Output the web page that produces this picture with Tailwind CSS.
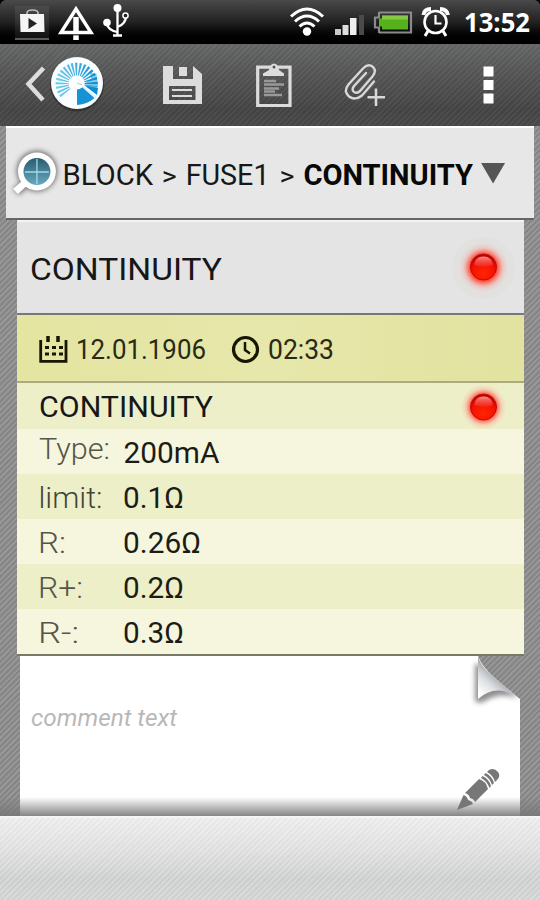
<!DOCTYPE html>
<html lang="en">
  <head>
    <meta charset="UTF-8" />
    <meta name="viewport" content="width=device-width, initial-scale=1.0" />
    <title>Continuity</title>
    <script src="https://cdn.jsdelivr.net/npm/@tailwindcss/browser@4"></script>
    <style>
      body {
        font-family: Roboto, sans-serif;
      }
      .hatch-dark {
        background:
          repeating-linear-gradient(135deg, #ffffff0a 0 1.5px, #0000000a 1.5px 4px),
          linear-gradient(#666868, #575757 35%, #464646 80%, #4a4a4a);
      }
      .hatch-gray {
        background: repeating-linear-gradient(135deg, #989898 0 1.5px, #868687 2px 4px);
      }
      .hatch-light {
        background:
          repeating-linear-gradient(135deg, #ffffff22 0 1.5px, #00000006 2px 4px),
          linear-gradient(#efefef, #e2e2e2 40%, #d1d2d2 75%, #d5d6d6);
      }
    </style>
  </head>
  <body class="w-[540px] h-[900px] overflow-hidden flex flex-col text-[#171717] whitespace-nowrap">
    <!-- Status bar -->
    <div class="h-[44px] shrink-0 bg-linear-to-b from-[#4a4a4a] via-[#222] to-black flex items-center">
      <svg class="w-[400px] h-[44px]" viewBox="0 0 400 44" fill="none">
        <path d="M0 0H5Q1 1 0 5Z" fill="#000" />
        <!-- market -->
        <rect x="15" y="6" width="34" height="32" fill="#fff" opacity=".07" />
        <path d="M27 14v-1q0-3 5.500-3t5.500 3v1" stroke="#bbb" stroke-width="1.700" />
        <path d="M20 14H44L44.500 32H20.500Z" fill="#f4f4f4" />
        <path d="M28.500 18V29L37 23.500Z" fill="#222" />
        <path d="M15 39H49" stroke="#777" stroke-width="1.500" />
        <!-- warning -->
        <path d="M76 9L61 32.500H91Z" stroke="#fff" stroke-width="3.400" />
        <path d="M76 17V40" stroke="#fff" stroke-width="5.500" />
        <path d="M73 34.800H79" stroke="#333" stroke-width="1.300" />
        <!-- usb -->
        <circle cx="117.500" cy="8" r="4" fill="#fff" />
        <path d="M117.500 8V35M113 35.500H122M106.500 23Q108 30 117 32M117.500 27Q126 24 126 16" stroke="#fff" stroke-width="2.300" />
        <circle cx="107" cy="22.500" r="3.800" fill="#fff" />
        <circle cx="125.500" cy="15.500" r="2.600" stroke="#fff" stroke-width="1.500" fill="#222" />
        <!-- wifi -->
        <g stroke="#fff" stroke-width="3">
          <path d="M291 16.500Q307 1.500 323 16.500" />
          <path d="M295 21.500Q307 10.500 319 21.500" />
          <path d="M299.500 26.500Q307 19.500 314.500 26.500" />
        </g>
        <circle cx="307" cy="31.500" r="4.200" fill="#fff" />
        <!-- signal -->
        <path d="M335 29h6v6h-6z" fill="#c8c8c8" />
        <path d="M342.500 25h6v10h-6z" fill="#ddd" />
        <path d="M350 18h6.500v17H350z" fill="#eee" />
        <path d="M359 15h5v20h-5z" fill="#4a4a4a" />
        <!-- battery -->
        <path d="M379 12.500H400M379 32.500H400M379 12V17.500H375V27.500H379V33" stroke="#8a8a8a" stroke-width="2.200" />
        <path d="M382 15.500h18v14H382v-3h-3v-8h3z" fill="#55b21c" />
        <path d="M382 15.500h18v4h-18z" fill="#83c943" />
      </svg>
      <svg class="w-[140px] h-[44px]" viewBox="400 0 140 44" fill="none">
        <path d="M540 0H535Q539 1 540 5Z" fill="#000" />
        <path d="M400 12.500H411V32.500H400" stroke="#8a8a8a" stroke-width="2.200" />
        <path d="M400 15.500h8v14h-8z" fill="#55b21c" />
        <path d="M400 15.500h8v4h-8z" fill="#83c943" />
        <circle cx="435.500" cy="22" r="11" stroke="#fff" stroke-width="2.600" />
        <path d="M435.500 15V23.500H441.500" stroke="#fff" stroke-width="2.200" />
        <path d="M423.500 15Q424 9 431 9M440 9Q447 9 448 15" stroke="#fff" stroke-width="4" />
        <path d="M428 31L425 36M443 31L446 36" stroke="#fff" stroke-width="3" />
        <text x="464" y="32" font-size="26" font-weight="700" textLength="66" lengthAdjust="spacingAndGlyphs" font-family="Open Sans, sans-serif" fill="#fff">13:52</text>
      </svg>
    </div>

    <!-- Action bar -->
    <div class="hatch-dark h-[82px] shrink-0 border-t border-[#666]">
      <svg class="w-[540px] h-[81px]" viewBox="0 45 540 81" fill="none">
        <defs>
          <linearGradient id="rays" x1="58" x2="97" y1="0" y2="0" gradientUnits="userSpaceOnUse">
            <stop stop-color="#74cdea" />
            <stop offset="1" stop-color="#078fd3" />
          </linearGradient>
        </defs>
        <path d="M43.500 68L28.500 84L43 100" stroke="#ddd" stroke-width="4.500" />
        <circle cx="77" cy="84.500" r="27" fill="#222" opacity=".5" />
        <circle cx="77" cy="83" r="26" fill="#fafdff" />
        <path d="M65.500 93A14.500 14.500 0 1 1 91 86" stroke="url(#rays)" stroke-width="13" stroke-dasharray="1.650 1.500" />
        <path d="M90 72L96.500 74L98 84L97 91L84 84L91 79Z" fill="#078fd3" opacity=".45" />
        <path d="M77 88V105Q88 104 94.500 98L82 87Z" fill="#1593d5" />
        <path d="M84 85L97 95L98 88Z" fill="#078fd3" />
        <path d="M82 86L96 97" stroke="#d8effa" stroke-width="1.300" />
        <circle cx="77" cy="82.500" r="7" fill="#fff" />
        <path d="M77 83L82 85" stroke="#9bc" stroke-width=".8" />
        <!-- save -->
        <path fill-rule="evenodd" fill="#dcdcdc" d="M163 66H173V79H193V66L202 74V104H163ZM169 86V100H195.500V86Z" />
        <path d="M179 67h8v9h-8z" fill="#dcdcdc" />
        <path d="M172 90H192M172 96H192" stroke="#dcdcdc" stroke-width="2" />
        <!-- clipboard -->
        <path d="M257.700 67.200H290V105.500H257.700Z" stroke="#dcdcdc" stroke-width="3.200" />
        <path d="M263 76V73.500L269 70Q270 63.500 274 63.500T279 70L284 73.500V76Z" fill="#dcdcdc" />
        <path d="M264 81H276M264 84.500H284M264 88.500H279M264 91.500H275M264 95H282" stroke="#999" stroke-width="2.400" />
        <circle cx="274" cy="67" r="1.500" fill="#555" />
        <!-- attach -->
        <path d="M374 81.500L362 95.500Q355 101 349 96.500Q343 91 348.500 84.500L363 68.500Q368 63 373 67Q377 71 372.500 76.500L359.500 91.500Q356 94 353.500 91.500Q351.500 89 354 86L366 73" stroke="#d8d8d8" stroke-width="2.400" stroke-linecap="round" />
        <path d="M376 88.500V106M367.500 97.300H385" stroke="#d8d8d8" stroke-width="2.600" />
        <!-- overflow menu -->
        <path d="M483.500 66.500h10v10h-10zM483.500 80h10v10h-10zM483.500 93.500h10v10h-10z" fill="#fff" />
      </svg>
    </div>

    <!-- Content -->
    <main class="hatch-gray h-[690px] shrink-0 relative">
      <div class="mx-[6px] h-[94px] bg-[#e7e7e7] border-t-2 border-t-white border-b-2 border-b-[#666] flex items-center">
        <svg class="w-[529px] h-[90px]" viewBox="6 128 529 90" fill="none">
          <defs>
            <filter id="soft" x="-50%" y="-50%" width="200%" height="200%"><feGaussianBlur stdDeviation="2.500" /></filter>
            <linearGradient id="lens" x1="0" x2="0" y1="0" y2="1">
              <stop stop-color="#285b70" />
              <stop offset="1" stop-color="#69a9c0" />
            </linearGradient>
          </defs>
          <g filter="url(#soft)" opacity=".75">
            <circle cx="37" cy="171" r="20.500" fill="#555" />
            <path d="M25 184L16 192" stroke="#555" stroke-width="9" />
          </g>
          <path d="M25 183L15.500 191.500" stroke="#fff" stroke-width="7" />
          <circle cx="37" cy="171.500" r="19" fill="#fff" />
          <circle cx="37" cy="171.500" r="13.500" fill="url(#lens)" />
          <path d="M37 159V184M25 172H49" stroke="#9ddbe9" stroke-width="1.300" />
          <g font-size="29.500" fill="#171717">
            <text x="62.500" y="185" textLength="91" lengthAdjust="spacingAndGlyphs">BLOCK</text>
            <text x="162" y="185" font-size="26" textLength="15" lengthAdjust="spacingAndGlyphs">&gt;</text>
            <text x="186" y="185" textLength="84" lengthAdjust="spacingAndGlyphs">FUSE1</text>
            <text x="280" y="185" font-size="26" textLength="15" lengthAdjust="spacingAndGlyphs">&gt;</text>
            <text x="304" y="185" font-weight="700" fill="#080808" textLength="170" lengthAdjust="spacingAndGlyphs">CONTINUITY</text>
          </g>
          <path d="M482 163H506L494 183.500Z" fill="#555" />
        </svg>
      </div>

      <section class="ml-[17px] w-[506.500px]">
        <div class="h-[95px] bg-[#e4e4e4] border-t-2 border-t-[#f4f4f4] border-b-2 border-b-[#777]">
          <svg class="w-[506px] h-[91px]" viewBox="17 222 506 91" fill="none">
            <defs>
              <radialGradient id="glow">
                <stop offset=".45" stop-color="#f31a0a" />
                <stop offset=".6" stop-color="#ff4b3b" stop-opacity=".75" />
                <stop offset=".8" stop-color="#ff8c80" stop-opacity=".28" />
                <stop offset="1" stop-color="#ffb0a8" stop-opacity="0" />
              </radialGradient>
              <radialGradient id="led" cx=".5" cy=".75" r=".7">
                <stop stop-color="#ff2600" />
                <stop offset=".65" stop-color="#f31103" />
                <stop offset="1" stop-color="#b80503" />
              </radialGradient>
              <linearGradient id="shine" x1="0" x2="0" y1="0" y2="1">
                <stop stop-color="#ffaaa5" stop-opacity=".85" />
                <stop offset="1" stop-color="#f55" stop-opacity=".25" />
              </linearGradient>
            </defs>
            <text x="30" y="280" font-size="31" fill="#171717" textLength="192" lengthAdjust="spacingAndGlyphs">CONTINUITY</text>
            <circle cx="483.500" cy="268" r="31" fill="#dedfdd" opacity=".65" />
            <circle cx="483.500" cy="267.500" r="25" fill="url(#glow)" />
            <circle cx="483.500" cy="267" r="13" fill="url(#led)" stroke="#c80b08" />
            <path d="M474 265Q475 256.500 483.500 256.500T493 265Q484 268 474 265Z" fill="url(#shine)" />
          </svg>
        </div>

        <!-- Date and time -->
        <div class="h-[68px] bg-linear-to-r from-[#e4e5a1] via-[#e6e7aa] to-[#e2e3a0] border-b-2 border-[#a9ab81]">
          <svg class="w-[506px] h-[66px]" viewBox="17 315 506 66" fill="none">
            <path d="M40.700 340V361.300H66V340" stroke="#171700" stroke-width="2.800" />
            <path d="M48 336V342M58 336V342" stroke="#171700" stroke-width="3.500" />
            <path d="M45 347.500H63M45 354H63" stroke="#171700" stroke-width="3" stroke-dasharray="4 3" />
            <circle cx="245.500" cy="349.500" r="12" stroke="#171700" stroke-width="3.200" />
            <path d="M245 342V350L250 353.500" stroke="#171700" stroke-width="2.500" />
            <g font-size="27" fill="#2a2a14">
              <text x="76" y="359" textLength="130" lengthAdjust="spacingAndGlyphs">12.01.1906</text>
              <text x="268" y="359" textLength="66" lengthAdjust="spacingAndGlyphs">02:33</text>
            </g>
          </svg>
        </div>

        <!-- Results -->
        <div class="h-[46px] bg-[#edefc9]">
          <svg class="w-[506px] h-[46px]" viewBox="17 383 506 46">
            <text x="39" y="417" font-size="30" fill="#171717" textLength="174" lengthAdjust="spacingAndGlyphs">CONTINUITY</text>
            <circle cx="483.500" cy="407" r="23" fill="url(#glow)" />
            <circle cx="483.500" cy="407" r="13" fill="url(#led)" stroke="#c80b08" />
            <path d="M474 405Q475 396.500 483.500 396.500T493 405Q484 408 474 405Z" fill="url(#shine)" />
          </svg>
        </div>
        <div class="h-[45px] bg-[#f6f6df]">
          <svg class="w-[506px] h-[45px]" viewBox="17 429 506 45">
            <text x="39" y="459" font-size="29.500" font-weight="300" fill="#555548" textLength="71" lengthAdjust="spacingAndGlyphs">Type:</text>
            <text x="123.500" y="463" font-size="30" fill="#1c1c16" textLength="96" lengthAdjust="spacingAndGlyphs">200mA</text>
          </svg>
        </div>
        <div class="h-[45px] bg-[#edefc9]">
          <svg class="w-[506px] h-[45px]" viewBox="17 474 506 45">
            <text x="38.500" y="508" font-size="29.500" font-weight="300" fill="#444438" textLength="64" lengthAdjust="spacingAndGlyphs">limit:</text>
            <text x="123" y="508" font-size="30" fill="#1c1c16" textLength="61" lengthAdjust="spacingAndGlyphs">0.1Ω</text>
          </svg>
        </div>
        <div class="h-[45px] bg-[#f6f6df]">
          <svg class="w-[506px] h-[45px]" viewBox="17 519 506 45">
            <text x="38" y="553" font-size="30" font-weight="300" fill="#555548" textLength="28" lengthAdjust="spacingAndGlyphs">R:</text>
            <text x="123" y="553" font-size="30" fill="#1c1c16" textLength="78" lengthAdjust="spacingAndGlyphs">0.26Ω</text>
          </svg>
        </div>
        <div class="h-[45px] bg-[#edefc9]">
          <svg class="w-[506px] h-[45px]" viewBox="17 564 506 45">
            <text x="38" y="598" font-size="30" font-weight="300" fill="#555548" textLength="45" lengthAdjust="spacingAndGlyphs">R+:</text>
            <text x="123" y="598" font-size="30" fill="#1c1c16" textLength="61" lengthAdjust="spacingAndGlyphs">0.2Ω</text>
          </svg>
        </div>
        <div class="h-[47px] bg-[#f6f6df] border-b-2 border-[#777866]">
          <svg class="w-[506px] h-[45px]" viewBox="17 609 506 45">
            <text x="38" y="643" font-size="30" font-weight="300" fill="#555548" textLength="41" lengthAdjust="spacingAndGlyphs">R-:</text>
            <text x="123" y="643" font-size="30" fill="#1c1c16" textLength="61" lengthAdjust="spacingAndGlyphs">0.3Ω</text>
          </svg>
        </div>
      </section>

      <!-- Comment note -->
      <svg class="ml-[20px] w-[501px] h-[160px]" viewBox="20 656 501 160" fill="none">
        <defs>
          <linearGradient id="curl" x1="480" y1="694" x2="498" y2="674" gradientUnits="userSpaceOnUse">
            <stop stop-color="#fff" />
            <stop offset=".5" stop-color="#dde0e3" />
            <stop offset="1" stop-color="#9b9fa5" />
          </linearGradient>
          <clipPath id="sheet"><path d="M20 656H478Q482 667 496 679L520 699V816H20Z" /></clipPath>
        </defs>
        <path d="M20 656H478Q482 667 496 679L520 699V816H20Z" fill="#fff" />
        <g clip-path="url(#sheet)">
          <path d="M475 664V701Q480 705 487 700Q500 692 518 698L478 664Z" fill="#555" opacity=".65" filter="url(#soft)" />
        </g>
        <path d="M478 657Q482 669 496 680L519 698.500Q509 691 499 690.500Q488 690 478 699Z" fill="url(#curl)" />
        <text x="31" y="726" font-size="24" font-style="italic" fill="#b8b8b8" textLength="146" lengthAdjust="spacingAndGlyphs">comment text</text>
        <!-- pencil -->
        <g fill="#777">
          <path d="M457 810L463.500 795Q467 796 468 800Q472 801 473 804Z" />
          <path d="M465 793L479 779Q486 781 488 789L475 802Q474 799 470 798Q469 794 465 793Z" />
          <path d="M481 778L482.500 776Q489 779 491 786L489.500 788Q487 781 481 778Z" />
          <path d="M484 775L485.500 773Q492 776 494 783L492 785Q490 778 484 775Z" />
          <path d="M487 772L489 770Q494 767 498 772Q501 776 497 780L495 782Q493 775 487 772Z" />
        </g>
      </svg>
      <div class="absolute left-0 bottom-0 w-full h-[19px] bg-linear-to-b from-[#777]/0 to-[#777]/90"></div>
    </main>

    <footer class="hatch-light h-[84px] shrink-0 border-t-2 border-[#f5f5f5]"></footer>
  </body>
</html>
